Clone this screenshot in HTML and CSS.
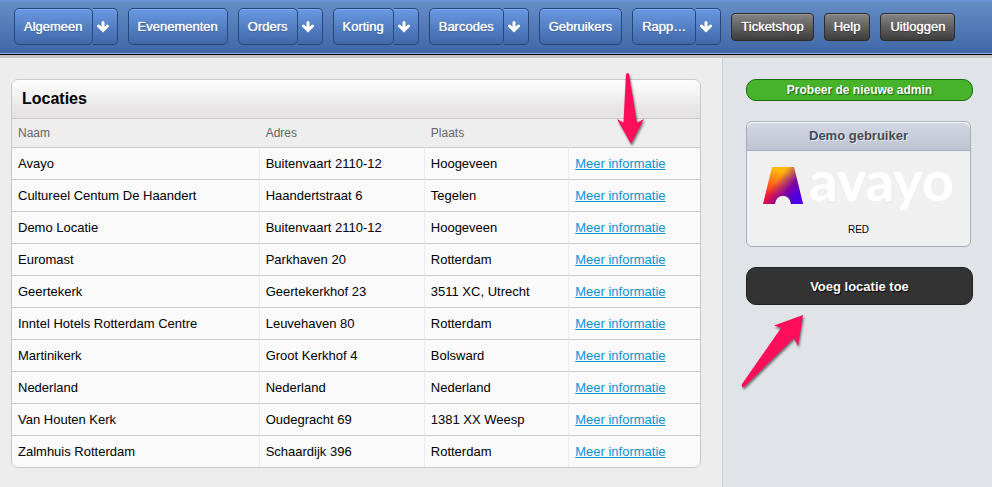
FILE: index.html
```html
<!DOCTYPE html>
<html lang="nl">
<head>
    <meta charset="UTF-8">
    <meta name="viewport" content="width=device-width, initial-scale=1.0">
    <title>Locaties</title>
    <link rel="stylesheet" href="styles.css">
</head>
<body>

<svg class="symbols" aria-hidden="true">
    <symbol id="down" viewBox="0 0 12 12">
        <path d="M6 1.500V9M1.500 5L6 9.500L10.500 5" fill="none" stroke="currentColor" stroke-width="3" stroke-linecap="round"/>
    </symbol>
</svg>

<nav class="topbar">
    <div class="menu">
        <button class="menu-button">Algemeen</button>
        <button class="menu-toggle" aria-label="Algemeen openen"><svg><use href="#down"/></svg></button>
    </div>
    <div class="menu">
        <button class="menu-button">Evenementen</button>
    </div>
    <div class="menu">
        <button class="menu-button">Orders</button>
        <button class="menu-toggle" aria-label="Orders openen"><svg><use href="#down"/></svg></button>
    </div>
    <div class="menu">
        <button class="menu-button">Korting</button>
        <button class="menu-toggle" aria-label="Korting openen"><svg><use href="#down"/></svg></button>
    </div>
    <div class="menu">
        <button class="menu-button">Barcodes</button>
        <button class="menu-toggle" aria-label="Barcodes openen"><svg><use href="#down"/></svg></button>
    </div>
    <div class="menu">
        <button class="menu-button">Gebruikers</button>
    </div>
    <div class="menu">
        <button class="menu-button">Rapp…</button>
        <button class="menu-toggle" aria-label="Rapportages openen"><svg><use href="#down"/></svg></button>
    </div>
    <button class="dark-button">Ticketshop</button>
    <button class="dark-button">Help</button>
    <button class="dark-button">Uitloggen</button>
</nav>

<div class="page">
    <main class="content">
        <section class="panel">
            <h1>Locaties</h1>
            <table>
                <thead>
                    <tr><th class="col-name">Naam</th><th class="col-address">Adres</th><th class="col-city">Plaats</th><th></th></tr>
                </thead>
                <tbody>
                    <tr><td>Avayo</td><td>Buitenvaart 2110-12</td><td>Hoogeveen</td><td><a href="#">Meer informatie</a></td></tr>
                    <tr><td>Cultureel Centum De Haandert</td><td>Haandertstraat 6</td><td>Tegelen</td><td><a href="#">Meer informatie</a></td></tr>
                    <tr><td>Demo Locatie</td><td>Buitenvaart 2110-12</td><td>Hoogeveen</td><td><a href="#">Meer informatie</a></td></tr>
                    <tr><td>Euromast</td><td>Parkhaven 20</td><td>Rotterdam</td><td><a href="#">Meer informatie</a></td></tr>
                    <tr><td>Geertekerk</td><td>Geertekerkhof 23</td><td>3511 XC, Utrecht</td><td><a href="#">Meer informatie</a></td></tr>
                    <tr><td>Inntel Hotels Rotterdam Centre</td><td>Leuvehaven 80</td><td>Rotterdam</td><td><a href="#">Meer informatie</a></td></tr>
                    <tr><td>Martinikerk</td><td>Groot Kerkhof 4</td><td>Bolsward</td><td><a href="#">Meer informatie</a></td></tr>
                    <tr><td>Nederland</td><td>Nederland</td><td>Nederland</td><td><a href="#">Meer informatie</a></td></tr>
                    <tr><td>Van Houten Kerk</td><td>Oudegracht 69</td><td>1381 XX Weesp</td><td><a href="#">Meer informatie</a></td></tr>
                    <tr><td>Zalmhuis Rotterdam</td><td>Schaardijk 396</td><td>Rotterdam</td><td><a href="#">Meer informatie</a></td></tr>
                </tbody>
            </table>
            <svg class="pointer pointer-info" viewBox="0 0 34 80" aria-hidden="true">
                <path d="M13 2Q14.500 0 16 2L24 50.500L31 47L18 72L4 47L10.500 50.500Z"/>
            </svg>
        </section>
    </main>

    <aside class="sidebar">
        <button class="new-admin">Probeer de nieuwe admin</button>
        <section class="user-card">
            <h2>Demo gebruiker</h2>
            <div class="logo">
                <svg class="logo-mark" viewBox="0 0 40 37" aria-hidden="true">
                    <defs>
                        <linearGradient id="warm" x1="0.400" y1="0" x2="0.150" y2="1">
                            <stop offset="0.100" stop-color="#ffb70a"/>
                            <stop offset="0.800" stop-color="#ff1a2a"/>
                        </linearGradient>
                        <linearGradient id="cool" x1="0.350" y1="0.350" x2="0.900" y2="0.750">
                            <stop offset="0" stop-color="#7a00a8" stop-opacity="0"/>
                            <stop offset="0.600" stop-color="#7a00a8"/>
                            <stop offset="1" stop-color="#4b00e6"/>
                        </linearGradient>
                    </defs>
                    <path fill="url(#warm)" d="M9 0H31L40 37H28C27 26 13 26 12 37H0Z"/>
                    <path fill="url(#cool)" d="M9 0H31L40 37H28C27 26 13 26 12 37H0Z"/>
                </svg>
                <span class="logo-name">avayo</span>
            </div>
            <p>RED</p>
        </section>
        <div class="add-area">
            <button class="add-location">Voeg locatie toe</button>
            <svg class="pointer pointer-add" viewBox="0 0 68 80" aria-hidden="true">
                <path d="M63 2L34 12.500L41 15L2 71Q1 75 4 74L54 25L58 33Z"/>
            </svg>
        </div>
    </aside>
</div>

</body>
</html>
```
FILE: styles.css
```css
* {
    box-sizing: border-box;
}

body {
    margin: 0;
    min-height: 100vh;
    display: flex;
    flex-direction: column;
    font-family: "Liberation Sans", Arial, sans-serif;
    font-size: 13px;
    background-color: #ededed;
}

button {
    font-family: inherit;
    font-size: 13px;
    font-weight: bold;
    color: #fff;
    cursor: pointer;
}

.symbols {
    display: none;
}

/* top bar */
.topbar {
    position: relative;
    display: flex;
    align-items: center;
    gap: 10px;
    padding: 7px 14px 9px;
    border-top: 1px solid #6d9be0;
    border-bottom: 1px solid #000;
    background: linear-gradient(#658dc6, #3f67a6);
    box-shadow: inset 0 -1px 0 #8ab4f8, 0 3px 0 #c6c6c6;
}

.menu {
    display: flex;
}

.menu-button,
.menu-toggle {
    height: 37px;
    border: 1px solid #26477a;
    background: linear-gradient(#6998e2, #4068a8);
    box-shadow: inset 0 1px 0 #7fabf0;
}

.menu-button {
    padding: 0 9px;
    font-weight: normal;
    border-radius: 5px;
    text-shadow: 0 0 1px #fff, 0 1px 1px #2c4f86;
}

.menu-toggle {
    display: flex;
    align-items: center;
    width: 25px;
    padding: 0 4px;
    border-left: 0;
    border-radius: 0 5px 5px 0;
}

.menu-toggle svg {
    width: 12px;
    height: 12px;
}

.dark-button {
    height: 28px;
    padding: 0 9px;
    font-weight: normal;
    border: 1px solid #2b2b2b;
    border-radius: 4px;
    background: linear-gradient(#858585, #3c3c3c);
    box-shadow: inset 0 1px 0 #999;
    text-shadow: 0 0 1px #fff, 0 1px 1px #222;
}

/* page */
.page {
    flex: 1;
    display: flex;
}

.content {
    flex: 1;
    padding: 24px 21px 19px 11px;
}

.panel {
    position: relative;
    border: 1px solid #c9c9c9;
    border-radius: 7px;
    background-color: #fafafa;
}

.panel h1 {
    margin: 0;
    padding: 0 10px;
    font-size: 16px;
    line-height: 38px;
    border-radius: 7px 7px 0 0;
    background: linear-gradient(#fff, #e6e4e5 80%);
}

table {
    width: 100%;
    table-layout: fixed;
    border-collapse: separate;
    border-spacing: 0;
}

th,
td {
    padding: 0 6px;
    text-align: left;
    border-top: 1px solid #c9c9c9;
}

th {
    height: 29px;
    font-size: 12px;
    font-weight: normal;
    color: #666;
    background-color: #eee;
}

td {
    height: 32px;
    border-right: 1px solid #ebebeb;
}

td:last-child {
    border-right: 0;
}

.col-name {
    width: 36%;
}

.col-address {
    width: 24%;
}

.col-city {
    width: 21%;
}

td a {
    color: #0c93d6;
}

/* sidebar */
.sidebar {
    width: 270px;
    padding: 24px 19px 19px 23px;
    border-left: 1px solid #c0cfe6;
    background-color: #e0e3e8;
}

.new-admin {
    display: block;
    width: 100%;
    height: 22px;
    padding: 0;
    font-size: 12px;
    border: 1px solid #176b12;
    border-radius: 10px;
    background-color: #46b32a;
    text-shadow: 1px 1px 1px #1c5a10;
}

.user-card {
    margin: 20px 2px 20px 0;
    border: 1px solid #a5afbf;
    border-radius: 6px;
    background-color: #f0f0f0;
    text-align: center;
}

.user-card h2 {
    margin: 0;
    font-size: 13px;
    line-height: 28px;
    color: #444a55;
    border-bottom: 1px solid #a5afbf;
    border-radius: 6px 6px 0 0;
    background: linear-gradient(#d3d8e3, #bdc4d1);
    box-shadow: inset 0 1px 0 #fff;
    text-shadow: 1px 1px 0 #e6eaf2;
}

.logo {
    display: flex;
    align-items: center;
    justify-content: center;
    gap: 6px;
    height: 72px;
    padding-bottom: 3px;
}

.logo-mark {
    width: 40px;
    height: 37px;
}

.logo-name {
    padding-bottom: 12px;
    font-family: Lato, sans-serif;
    font-size: 56px;
    font-weight: bold;
    line-height: 56px;
    color: #fff;
}

.user-card p {
    margin: 0;
    padding-bottom: 10px;
    font-size: 10px;
    line-height: 13px;
}

.add-area {
    position: relative;
}

.add-location {
    display: block;
    width: 100%;
    height: 38px;
    border: 1px solid #222;
    border-radius: 10px;
    background-color: #333;
    text-shadow: 1px 1px 1px #000;
}

/* pink arrows over the page */
.pointer {
    position: absolute;
    fill: #ff0f5b;
    filter: drop-shadow(1px 2px 1px rgba(0, 0, 0, 0.5));
    pointer-events: none;
}

.pointer-info {
    top: -8px;
    right: 53px;
    width: 34px;
    height: 80px;
}

.pointer-add {
    top: 46px;
    left: -6px;
    width: 68px;
    height: 80px;
}
```
